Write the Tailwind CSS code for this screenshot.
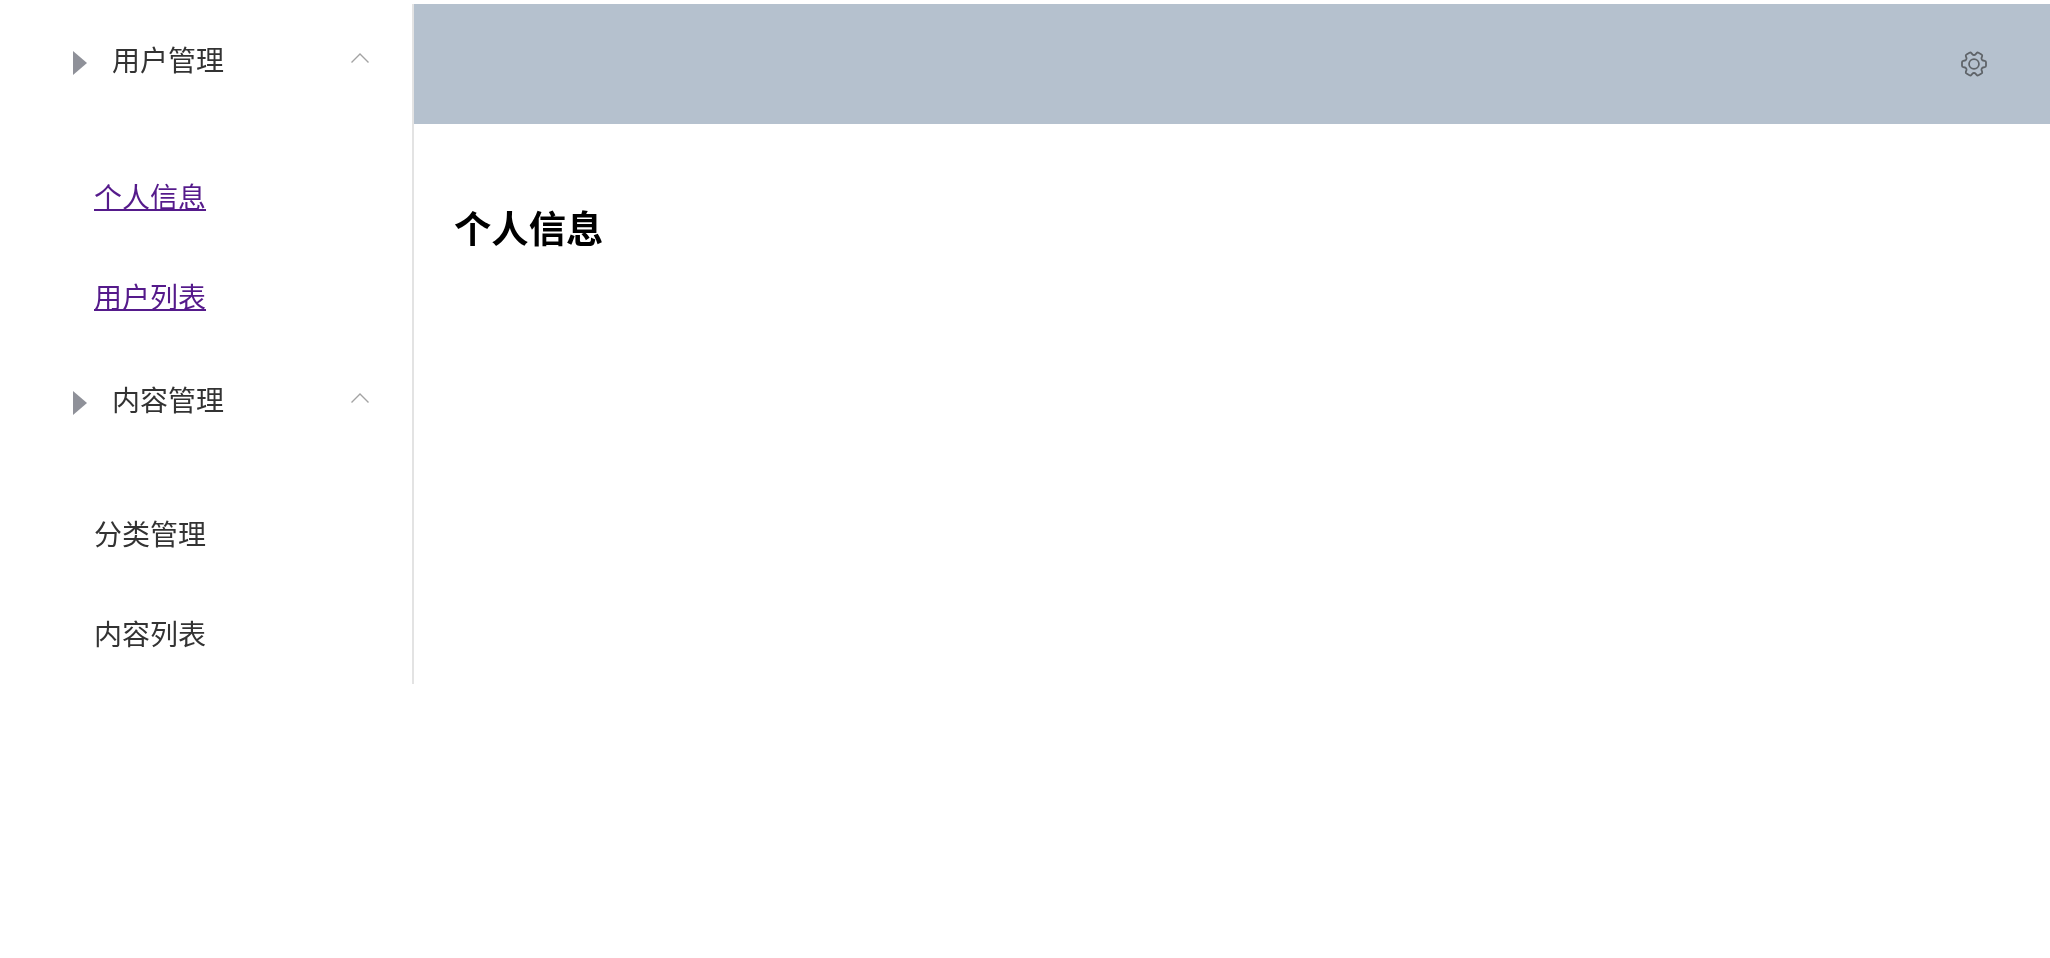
<!DOCTYPE html>
<html lang="zh-CN">
 <head>
  <meta charset="utf-8"/>
  <title>个人信息</title>
  <script src="https://cdn.jsdelivr.net/npm/@tailwindcss/browser@4"></script>
 </head>
 <body class="bg-white font-['Noto_Sans_CJK_SC','Liberation_Sans',sans-serif]">
  <div class="pt-1 flex items-start">
   <!-- sidebar -->
   <aside class="w-[414px] h-[680px] shrink-0 border-r-2 border-[#e3e3e3] text-[28px] leading-[40px] text-[#333333] will-change-transform">
    <div class="h-[112px] pl-[73px] pr-[43px] flex items-center">
     <svg class="w-[14px] h-[24px] shrink-0 mt-[5px]" viewBox="0 0 14 24"><polygon points="0,0 14,12 0,24" fill="#8f9199"/></svg>
     <span class="ml-[25px] flex-1 pb-[3px]">用户管理</span>
     <svg class="w-[18px] h-[10px] shrink-0 -mt-[5px]" viewBox="0 0 18 10" fill="none" stroke="#a3a3a3" stroke-width="1.4"><polyline points="0.5,9.5 9,1 17.5,9.5"/></svg>
    </div>
    <div class="pt-[30px]">
     <a href="#" class="h-[100px] pl-[94px] flex items-center text-[#551a8b]"><span class="underline decoration-2 underline-offset-[1px]">个人信息</span></a>
     <a href="#" class="h-[100px] pl-[94px] flex items-center text-[#551a8b]"><span class="underline decoration-2 underline-offset-[1px]">用户列表</span></a>
    </div>
    <div class="h-[108px] pl-[73px] pr-[43px] flex items-center">
     <svg class="w-[14px] h-[24px] shrink-0 mt-[5px]" viewBox="0 0 14 24"><polygon points="0,0 14,12 0,24" fill="#8f9199"/></svg>
     <span class="ml-[25px] flex-1 pb-[3px]">内容管理</span>
     <svg class="w-[18px] h-[10px] shrink-0 -mt-[5px]" viewBox="0 0 18 10" fill="none" stroke="#a3a3a3" stroke-width="1.4"><polyline points="0.5,9.5 9,1 17.5,9.5"/></svg>
    </div>
    <div class="pt-[30px]">
     <div class="h-[100px] pl-[94px] pb-[3px] flex items-center">分类管理</div>
     <div class="h-[100px] pl-[94px] pb-[3px] flex items-center">内容列表</div>
    </div>
   </aside>
   <!-- main -->
   <main class="flex-1">
    <header class="h-[120px] bg-[#b5c1ce] flex items-center justify-end pr-[60px]">
     <svg class="w-[32px] h-[32px] rotate-90" viewBox="0 0 24 24" fill="none" stroke="#5f6469" stroke-width="1.35" stroke-linecap="round" stroke-linejoin="round">
      <path d="M9.594 3.94c.09-.542.56-.94 1.11-.94h2.593c.55 0 1.02.398 1.11.94l.213 1.281c.063.374.313.686.645.87.074.04.147.083.22.127.325.196.72.257 1.075.124l1.217-.456a1.125 1.125 0 0 1 1.37.49l1.296 2.247a1.125 1.125 0 0 1-.26 1.431l-1.003.827c-.293.241-.438.613-.43.992a7.723 7.723 0 0 1 0 .255c-.008.378.137.75.43.991l1.004.827c.424.35.534.955.26 1.43l-1.298 2.247a1.125 1.125 0 0 1-1.369.491l-1.217-.456c-.355-.133-.75-.072-1.076.124a6.47 6.47 0 0 1-.22.128c-.331.183-.581.495-.644.869l-.213 1.281c-.09.543-.56.94-1.11.94h-2.594c-.55 0-1.019-.398-1.11-.94l-.213-1.281c-.062-.374-.312-.686-.644-.87a6.52 6.52 0 0 1-.22-.127c-.325-.196-.72-.257-1.076-.124l-1.217.456a1.125 1.125 0 0 1-1.369-.49l-1.297-2.247a1.125 1.125 0 0 1 .26-1.431l1.004-.827c.292-.24.437-.613.43-.991a6.932 6.932 0 0 1 0-.255c.007-.38-.138-.751-.43-.992l-1.004-.827a1.125 1.125 0 0 1-.26-1.43l1.297-2.247a1.125 1.125 0 0 1 1.37-.491l1.216.456c.356.133.751.072 1.076-.124.072-.044.146-.086.22-.128.332-.183.582-.495.644-.869l.214-1.28Z"/>
      <circle cx="12" cy="12" r="3.7"/>
     </svg>
    </header>
    <h1 class="pl-10 pt-[75px] text-[37.33px] leading-[56px] font-bold text-black will-change-transform">个人信息</h1>
   </main>
  </div>
 </body>
</html>
